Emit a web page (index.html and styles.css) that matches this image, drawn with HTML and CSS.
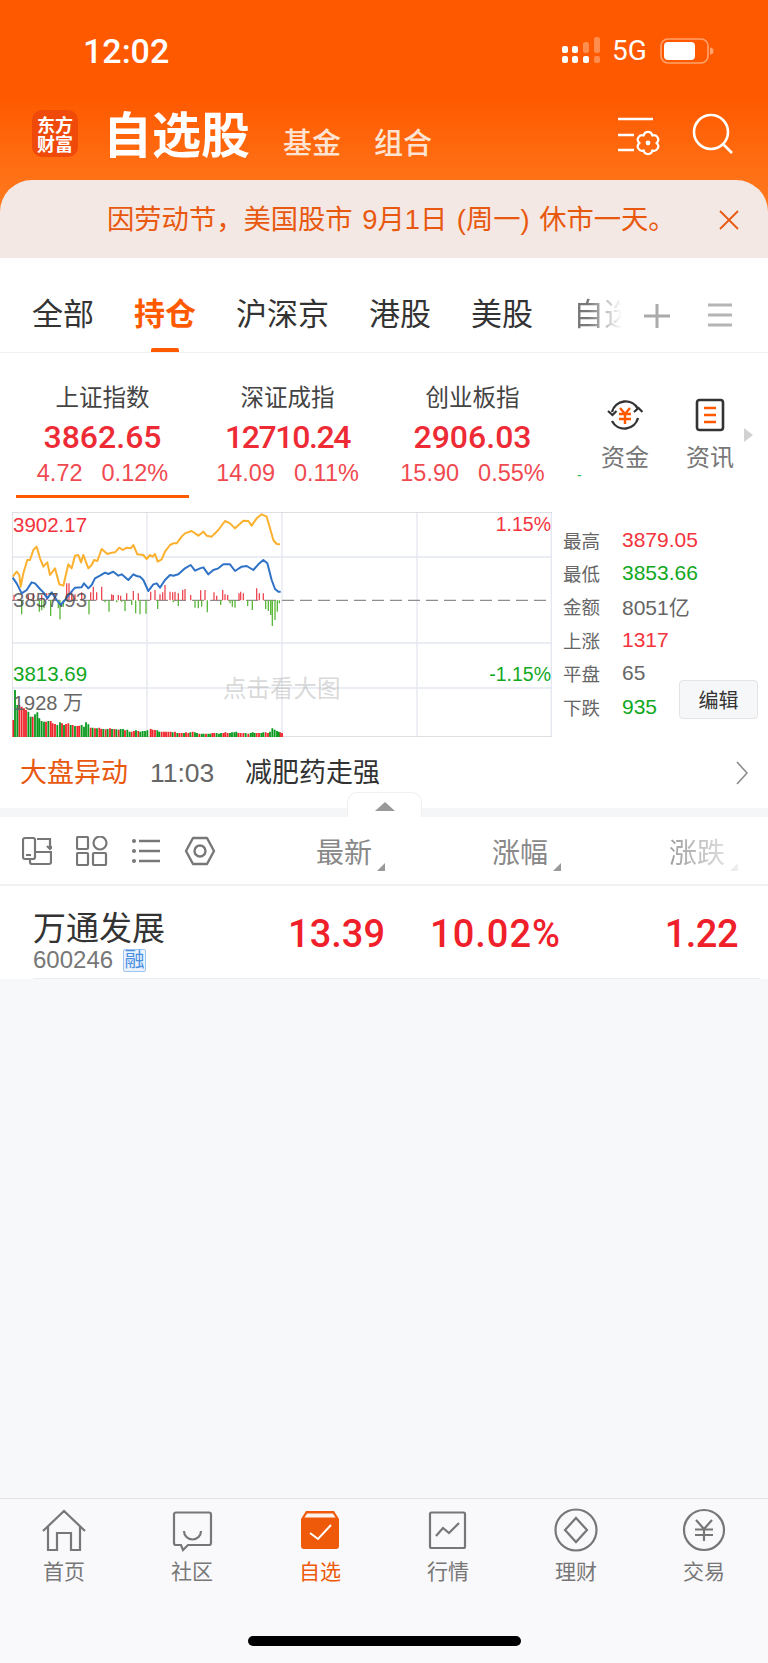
FILE: index.html
```html
<!DOCTYPE html>
<html lang="zh-CN">
<head>
<meta charset="utf-8">
<title>自选股</title>
<link rel="stylesheet" href="styles.css">
</head>
<body>
<div class="page">
  <header class="top">
    <div class="status">
      <span class="time">12:02</span>
      <svg class="signal" width="40" height="28" viewBox="0 0 40 28">
        <g fill="#fff"><rect x="1" y="9" width="6" height="7" rx="2"/><rect x="11" y="9" width="6" height="7" rx="2"/><rect x="1" y="19" width="6" height="7" rx="2"/><rect x="11" y="19" width="6" height="7" rx="2"/><rect x="22" y="19" width="6" height="7" rx="2"/></g>
        <g fill="#ff8d4d"><rect x="22" y="5" width="6" height="11" rx="2"/><rect x="33" y="0" width="6" height="16" rx="2"/><rect x="33" y="19" width="6" height="7" rx="2"/></g>
      </svg>
      <span class="net">5G</span>
      <svg class="battery" width="55" height="26" viewBox="0 0 55 26">
        <rect x="1" y="1" width="47" height="24" rx="7" fill="none" stroke="#ffa36e" stroke-width="1.6"/>
        <rect x="4" y="4" width="31" height="18" rx="4" fill="#fff"/>
        <path d="M50 9.5a3.5 3.5 0 0 1 0 7z" fill="#ffa36e"/>
      </svg>
    </div>
    <div class="titlebar">
      <div class="logo"><span>东方</span><span>财富</span></div>
      <h1 class="title">自选股</h1>
      <span class="subtitle">基金</span>
      <span class="subtitle">组合</span>
      <svg class="cfg" width="42" height="40" viewBox="0 0 42 40">
        <path d="M0 2H35M0 18H16M0 33H16" stroke="#fff" stroke-width="2.4" fill="none"/>
        <path d="M38.5 26A4.3 4.3 0 0 1 34.25 33.4A4.3 4.3 0 0 1 25.75 33.4A4.3 4.3 0 0 1 21.5 26A4.3 4.3 0 0 1 25.75 18.6A4.3 4.3 0 0 1 34.25 18.6A4.3 4.3 0 0 1 38.5 26Z" fill="none" stroke="#fff" stroke-width="2.2" stroke-linejoin="round"/>
        <circle cx="30" cy="26" r="2.4" fill="#fff"/>
      </svg>
      <svg class="search" width="42" height="42" viewBox="0 0 42 42">
        <circle cx="19" cy="19" r="17" fill="none" stroke="#fff" stroke-width="2.6"/>
        <path d="M31 31l9 9" stroke="#fff" stroke-width="2.6" fill="none"/>
      </svg>
    </div>
    <div class="notice">
      <span class="notice-text">因劳动节，美国股市 9月1日 (周一) 休市一天。</span>
      <svg class="notice-close" width="20" height="20" viewBox="0 0 20 20"><path d="M1 1l18 18M19 1L1 19" stroke="#e8590f" stroke-width="1.8" fill="none"/></svg>
    </div>
  </header>

  <nav class="tabs">
    <span class="tab">全部</span>
    <span class="tab active">持仓</span>
    <span class="tab">沪深京</span>
    <span class="tab">港股</span>
    <span class="tab">美股</span>
    <span class="tab fade">自选</span>
    <svg class="tab-plus" width="26" height="24" viewBox="0 0 26 24"><path d="M0 12H26M13 0V24" stroke="#aaa" stroke-width="3" fill="none"/></svg>
    <svg class="tab-menu" width="24" height="24" viewBox="0 0 24 24"><path d="M0 2H24M0 12H24M0 22H24" stroke="#b5b5b5" stroke-width="3" fill="none"/></svg>
  </nav>

  <section class="indices">
    <div class="idx selected">
      <div class="idx-name">上证指数</div>
      <div class="idx-val">3862.65</div>
      <div class="idx-chg"><span>4.72</span><span>0.12%</span></div>
    </div>
    <div class="idx">
      <div class="idx-name">深证成指</div>
      <div class="idx-val tight">12710.24</div>
      <div class="idx-chg"><span>14.09</span><span>0.11%</span></div>
    </div>
    <div class="idx">
      <div class="idx-name">创业板指</div>
      <div class="idx-val">2906.03</div>
      <div class="idx-chg"><span>15.90</span><span>0.55%</span></div>
    </div>
    <span class="tick">-</span>
    <div class="quick">
      <svg width="36" height="36" viewBox="0 0 36 36">
        <path d="M5 15A14 14 0 0 1 31 12M31 21A14 14 0 0 1 5 24" fill="none" stroke="#333" stroke-width="2.4"/>
        <path d="M1 14l4.5 4 4-4M27 15l4.500-4 4 4" fill="none" stroke="#333" stroke-width="2.2"/>
        <path d="M13 11l5 6 5-6M12 17H24M12 22H24M18 17V27" fill="none" stroke="#ff5a00" stroke-width="2.4"/>
      </svg>
      <span>资金</span>
    </div>
    <div class="quick">
      <svg width="36" height="36" viewBox="0 0 36 36">
        <rect x="5" y="3" width="26" height="30" rx="2.500" fill="none" stroke="#333" stroke-width="2.600"/>
        <path d="M12 11H24M12 18H24M12 25H24" fill="none" stroke="#ff5a00" stroke-width="2.600"/>
      </svg>
      <span>资讯</span>
    </div>
    <i class="more"></i>
  </section>

  <section class="market">
    <div class="chart">
      <svg class="chart-svg" width="540" height="225" viewBox="36 21 1620 675">
        <path class="grid" d="M36 156H1656M36 414H1656M36 549H1656M441 21V696M846 21V696M1251 21V696M1654 21V696"/>
        <path class="frame" d="M36 696V21H1656M36 696H1656"/>
        <path class="dash" d="M36 286H1656"/>
        <path class="bar-up" d="M42 286V270M85 286V270M100 286V265M125 286V270M140 286V265M165 286V265M200 286V235M207 286V235M215 286V262M225 286V268M245 286V262M272 286V262M280 286V245M290 286V262M305 286V245M335 286V268M340 286V270M355 286V270M362 286V272M380 286V265M400 286V258M415 286V265M452 286V260M465 286V255M480 286V268M488 286V262M495 286V240M510 286V260M518 286V262M525 286V260M535 286V265M548 286V255M555 286V252M572 286V270M602 286V256M615 286V255M642 286V262M650 286V272M668 286V255M675 286V268M683 286V270M717 286V265M722 286V260M730 286V265M770 286V250M778 286V265M790 286V265"/>
        <path class="bar-down" d="M65 286V328M118 286V320M125 286V316M132 286V310M152 286V333M180 286V343M175 286V310M190 286V305M267 286V328M315 286V292M327 286V320M350 286V292M375 286V318M365 286V290M395 286V300M407 286V325M420 286V328M438 286V326M473 286V312M520 286V292M535 286V303M585 286V308M595 286V310M605 286V305M622 286V322M662 286V300M690 286V295M697 286V305M705 286V308M743 286V303M757 286V315M797 286V312M805 286V318M812 286V330M817 286V363M825 286V345M832 286V320M838 286V295"/>
        <polyline class="line-avg" points="38,215 50,200 58,210 62,245 70,205 82,165 90,165 100,135 110,125 120,160 130,185 142,172 150,210 165,190 178,238 190,242 205,178 215,190 225,152 235,150 243,172 250,150 265,190 275,180 282,165 292,168 305,132 322,147 335,143 345,142 358,128 368,135 380,128 392,130 400,120 412,148 430,150 440,162 450,150 458,155 465,147 473,170 485,163 495,140 510,120 520,115 530,115 545,95 555,85 575,78 595,92 610,80 620,92 635,95 655,75 675,48 690,55 705,70 730,47 745,48 755,62 770,40 785,28 800,35 810,70 820,105 830,117 840,118"/>
        <polyline class="line-price" points="38,218 50,235 65,265 80,255 95,232 105,235 120,252 130,262 142,280 155,262 170,285 182,300 195,285 210,265 225,248 245,247 252,235 265,250 275,240 285,220 300,212 315,203 325,207 340,200 355,212 365,208 385,225 400,208 410,213 420,215 430,225 445,258 460,238 470,235 480,248 495,225 510,210 520,212 535,208 555,190 572,180 585,197 600,190 610,187 625,208 640,195 655,190 670,178 690,178 705,198 725,185 740,183 760,195 775,178 790,165 802,175 815,225 825,252 835,260 842,260"/>
        <path class="vol-up" d="M40 696V645M58 696V600M65 696V605M72 696V610M78 696V615M98 696V635M138 696V650M152 696V648M158 696V655M165 696V657M186 696V655M198 696V657M205 696V655M218 696V660M232 696V663M238 696V662M272 696V668M285 696V670M298 696V668M304 696V672M317 696V673M330 696V670M343 696V672M356 696V674M375 696V676M395 696V680M402 696V678M415 696V678M452 696V672M458 696V674M465 696V675M485 696V680M492 696V680M498 696V680M505 696V680M512 696V680M525 696V680M538 696V684M545 696V684M558 696V682M565 696V684M578 696V680M598 696V686M618 696V686M637 696V684M643 696V684M670 696V684M676 696V682M683 696V684M715 696V684M722 696V684M730 696V684M745 696V686M770 696V684M777 696V684M797 696V682M804 696V684M840 696V682M846 696V684"/>
        <path class="vol-down" d="M45 696V555M52 696V600M85 696V620M92 696V635M105 696V628M112 696V622M118 696V640M125 696V648M132 696V650M145 696V648M172 696V660M180 696V652M192 696V660M212 696V660M225 696V663M245 696V660M252 696V665M258 696V652M265 696V658M278 696V668M291 696V670M310 696V672M323 696V672M336 696V672M349 696V673M362 696V672M369 696V672M382 696V674M389 696V680M408 696V676M421 696V680M428 696V678M435 696V678M442 696V676M472 696V676M478 696V680M518 696V682M532 696V684M552 696V684M571 696V682M585 696V682M591 696V684M605 696V686M611 696V686M625 696V686M631 696V686M650 696V684M657 696V686M663 696V684M690 696V684M696 696V682M703 696V682M709 696V680M737 696V684M752 696V684M758 696V682M764 696V684M784 696V684M790 696V682M810 696V680M817 696V670M824 696V674M831 696V678M836 696V680"/>
      </svg>
      <span class="lab lab-high up">3902.17</span>
      <span class="lab lab-hp up">1.15%</span>
      <span class="lab lab-mid">3857.93</span>
      <span class="lab lab-low down">3813.69</span>
      <span class="lab lab-lp down">-1.15%</span>
      <span class="lab lab-vol">1928 万</span>
      <span class="watermark">点击看大图</span>
    </div>
    <div class="stats">
      <dl class="stat-list">
        <div class="stat"><dt>最高</dt><dd class="up">3879.05</dd></div>
        <div class="stat"><dt>最低</dt><dd class="down">3853.66</dd></div>
        <div class="stat"><dt>金额</dt><dd>8051亿</dd></div>
        <div class="stat"><dt>上涨</dt><dd class="up">1317</dd></div>
        <div class="stat"><dt>平盘</dt><dd>65</dd></div>
        <div class="stat"><dt>下跌</dt><dd class="down">935</dd></div>
      </dl>
      <button class="edit">编辑</button>
    </div>
  </section>

  <div class="alert">
    <span class="alert-tag">大盘异动</span>
    <span class="alert-time">11:03</span>
    <span class="alert-text">减肥药走强</span>
    <svg class="alert-arrow" width="12" height="24" viewBox="0 0 12 24"><path d="M1 1l10 11L1 23" fill="none" stroke="#8a8a8a" stroke-width="1.6"/></svg>
  </div>

  <div class="strip"><div class="handle"><i></i></div></div>

  <div class="cols thead">
    <div class="tools">
      <svg width="30" height="30" viewBox="0 0 30 30">
        <rect x="1" y="2" width="12" height="21" rx="2" fill="none" stroke="#777" stroke-width="2.200"/>
        <path d="M4 19H9M13 16H29V26a2 2 0 0 1-2 2H10a2 2 0 0 1-2-2V23M15 3H28V13M25 10l3 3 3-3" fill="none" stroke="#777" stroke-width="2.200"/>
      </svg>
      <svg width="32" height="30" viewBox="0 0 32 30">
        <g fill="none" stroke="#777" stroke-width="2.200"><rect x="1" y="1" width="11" height="12" rx="1"/><circle cx="24" cy="7" r="6.500"/><rect x="1" y="17" width="11" height="12" rx="1"/><rect x="17" y="17" width="13" height="12" rx="1"/></g>
      </svg>
      <svg width="28" height="30" viewBox="0 0 28 30">
        <g fill="#777"><circle cx="2" cy="5" r="2"/><circle cx="2" cy="15" r="2"/><circle cx="2" cy="25" r="2"/></g>
        <path d="M7 5H28M7 15H28M7 25H28" fill="none" stroke="#777" stroke-width="2.400"/>
      </svg>
      <svg width="32" height="30" viewBox="0 0 32 30">
        <path d="M2 15L9 2H23L30 15 23 28H9Z" fill="none" stroke="#777" stroke-width="2.400" stroke-linejoin="round"/>
        <circle cx="16" cy="15" r="5.500" fill="none" stroke="#777" stroke-width="2.400"/>
      </svg>
    </div>
    <span class="th">最新</span>
    <span class="th">涨幅</span>
    <span class="th th-fade">涨跌</span>
  </div>

  <div class="cols row">
    <div class="stock">
      <div class="stock-name">万通发展</div>
      <div class="stock-code"><span>600246</span><b class="badge">融</b></div>
    </div>
    <span class="num">13.39</span>
    <span class="num wide">10.02%</span>
    <span class="num narrow">1.22</span>
  </div>

  <main class="empty"></main>

  <footer class="nav">
    <div class="nav-items">
      <div class="nav-item">
        <svg width="44" height="44" viewBox="0 0 44 44"><path d="M1 23L22 3 43 23M6 19V42H15V25H29V42H38V19" fill="none" stroke="#777" stroke-width="2.200"/></svg>
        <span>首页</span>
      </div>
      <div class="nav-item">
        <svg width="44" height="44" viewBox="0 0 44 44"><path d="M6 4.500H39a2 2 0 0 1 2 2V35a2 2 0 0 1-2 2H18L13 42 11 37H6a2 2 0 0 1-2-2V6.500a2 2 0 0 1 2-2Z" fill="none" stroke="#777" stroke-width="2.200"/><path d="M14 23a8.500 8.500 0 0 0 17 0" fill="none" stroke="#777" stroke-width="2.200"/></svg>
        <span>社区</span>
      </div>
      <div class="nav-item current">
        <svg width="44" height="44" viewBox="0 0 44 44"><path d="M8 3H36L41 11V38a3 3 0 0 1-3 3H6a3 3 0 0 1-3-3V11Z" fill="#ee5a0a"/><path d="M9 5.500H35L37.500 9.500H6.500Z" fill="#fdf3ec"/><path d="M12 25l8 6 13-14" fill="none" stroke="#fff" stroke-width="2"/></svg>
        <span>自选</span>
      </div>
      <div class="nav-item">
        <svg width="44" height="44" viewBox="0 0 44 44"><rect x="4" y="4.500" width="35" height="35.500" rx="1.500" fill="none" stroke="#777" stroke-width="2.200"/><path d="M10 28l7-8 6 5 10-10" fill="none" stroke="#777" stroke-width="2.200"/></svg>
        <span>行情</span>
      </div>
      <div class="nav-item">
        <svg width="44" height="44" viewBox="0 0 44 44"><circle cx="22" cy="22" r="20.500" fill="none" stroke="#777" stroke-width="2.200"/><path d="M22 10L33 22 22 34 11 22Z" fill="none" stroke="#777" stroke-width="2.200"/></svg>
        <span>理财</span>
      </div>
      <div class="nav-item">
        <svg width="44" height="44" viewBox="0 0 44 44"><circle cx="22" cy="22" r="20" fill="none" stroke="#777" stroke-width="2.200"/><path d="M14 12l8 9 8-9M13 21.500H31M13 27H31M22 21V33" fill="none" stroke="#777" stroke-width="2.200"/></svg>
        <span>交易</span>
      </div>
    </div>
    <div class="home-bar"></div>
  </footer>
</div>
</body>
</html>
```

FILE: styles.css
```css
* { box-sizing: border-box; }
html, body { margin: 0; padding: 0; }
body {
  font-family: "Liberation Sans", "Noto Sans CJK SC", sans-serif;
  background: #fff;
  color: #333;
}
.page {
  width: 768px;
  height: 1663px;
  display: flex;
  flex-direction: column;
  overflow: hidden;
  background: #fff;
}
.up { color: #f4333c; }
.down { color: #12a81e; }

/* header */
.top {
  height: 258px;
  flex: none;
  background: linear-gradient(180deg, #ff5900 0%, #ff5900 38%, #ff7a1e 80%, #ff7a1e 100%);
  display: flex;
  flex-direction: column;
}
.status {
  height: 90px;
  flex: none;
  display: flex;
  align-items: center;
  padding: 12px 0 0 83px;
  color: #fff;
}
.time { font: 500 34px/40px Roboto, sans-serif; width: 478px; }
.net { font: 400 28px/30px Roboto, sans-serif; margin-left: 11px; }
.signal { margin-top: 0; }
.battery { margin-left: 13px; margin-top: -1px; }
.titlebar {
  height: 90px;
  flex: none;
  display: flex;
  align-items: flex-start;
  padding: 20px 0 0 32px;
  color: #fff;
}
.logo {
  width: 46px;
  height: 47px;
  background: #f04a0a;
  border-radius: 10px;
  font: 700 18px/19px "Noto Sans CJK SC", sans-serif;
  display: flex;
  flex-direction: column;
  align-items: center;
  justify-content: center;
}
.title {
  margin: -8px 0 0 25px;
  font: 700 49px/60px "Noto Sans CJK SC", sans-serif;
  width: 180px;
  white-space: nowrap;
}
.subtitle {
  font: 500 29px/36px "Noto Sans CJK SC", sans-serif;
  color: #fde3d2;
  margin-top: 13px;
  width: 91px;
  white-space: nowrap;
}
.cfg { flex: none; margin: 7px 0 0 153px; }
.search { flex: none; margin: 3px 0 0 32px; }
.notice {
  flex: 1;
  background: #f4e8e4;
  border-radius: 32px 32px 0 0;
  padding: 22px 0 0 107px;
  display: flex;
  align-items: flex-start;
}
.notice-text {
  font-size: 27.300px;
  word-spacing: 2px;
  line-height: 36px;
  color: #e8590f;
  width: 612px;
  flex: none;
  white-space: nowrap;
}
.notice-close { flex: none; margin-top: 8px; }

/* tabs */
.tabs {
  height: 95px;
  flex: none;
  padding: 38px 0 0 32px;
  display: flex;
  align-items: flex-start;
  gap: 40px;
  border-bottom: 1px solid #f0f0f0;
}
.tab {
  position: relative;
  flex: none;
  font-size: 31px;
  line-height: 38px;
  height: 56px;
  color: #333;
}
.tab.active { color: #ff5a00; font-weight: 700; }
.tab.active::after {
  content: "";
  position: absolute;
  left: 17px;
  bottom: 0;
  width: 28px;
  height: 4px;
  background: #ff5a00;
  border-radius: 2px 2px 0 0;
}
.tab.fade {
  width: 49px;
  overflow: hidden;
  white-space: nowrap;
  color: #777;
  -webkit-mask-image: linear-gradient(90deg, #000 30%, transparent 100%);
  mask-image: linear-gradient(90deg, #000 30%, transparent 100%);
}
.tab-plus { flex: none; margin: 8px 0 0 -18px; }
.tab-menu { flex: none; margin: 7px 0 0 -2px; }

/* indices */
.indices {
  display: flex;
  flex: none;
  align-items: flex-start;
  gap: 12px;
  padding-left: 16px;
}
.idx {
  width: 173px;
  flex: none;
  padding: 30px 0 7px;
  border-bottom: 3px solid transparent;
  text-align: center;
}
.idx.selected { border-bottom-color: #ff5a00; }
.idx-name { font-size: 23.500px; line-height: 30px; color: #444; }
.idx-val {
  font: 500 32px/40px Roboto, sans-serif;
  color: #ee2b35;
  margin-top: 4px;
}
.idx-val.tight { letter-spacing: -1.400px; }
.idx-chg {
  display: flex;
  justify-content: center;
  gap: 19px;
  font-size: 23.500px;
  line-height: 30px;
  color: #ef4a50;
  margin-top: 1px;
}
.tick {
  flex: none;
  width: 10px;
  height: 140px;
  padding: 112px 0 0 6px;
  font-size: 14px;
  line-height: 20px;
  color: #2db84a;
}
.quick {
  width: 64px;
  flex: none;
  display: flex;
  flex-direction: column;
  align-items: center;
  padding-top: 44px;
  font-size: 24px;
  line-height: 32px;
  color: #777;
  gap: 9px;
}
.quick svg { display: block; }
.quick + .quick { margin-left: 9px; }
.more {
  flex: none;
  width: 0;
  height: 0;
  margin: 75px 0 0 -10px;
  border-left: 9px solid #d2d2d2;
  border-top: 7px solid transparent;
  border-bottom: 7px solid transparent;
}

/* market */
.market {
  display: flex;
  flex: none;
  margin-top: 14px;
  height: 225px;
}
.chart {
  position: relative;
  flex: none;
  width: 540px;
  height: 225px;
  margin-left: 12px;
}
.chart-svg { display: block; }
.grid { fill: none; stroke: #e4e7ef; stroke-width: 4; }
.frame { fill: none; stroke: #d4d5da; stroke-width: 4; }
.dash { fill: none; stroke: #8e8e8e; stroke-width: 4; stroke-dasharray: 36 18; }
.bar-up { fill: none; stroke: #ee4a55; stroke-width: 4; }
.bar-down { fill: none; stroke: #5cb83c; stroke-width: 4; }
.line-avg { fill: none; stroke: #fbb02e; stroke-width: 6; stroke-linejoin: round; }
.line-price { fill: none; stroke: #2f72c6; stroke-width: 6; stroke-linejoin: round; }
.vol-up { fill: none; stroke: #f0262d; stroke-width: 5.500; }
.vol-down { fill: none; stroke: #0a9a1e; stroke-width: 5.500; }
.lab { position: absolute; font-size: 20px; line-height: 24px; white-space: nowrap; }
.lab-high { left: 1px; top: 1px; font-size: 20.500px; }
.lab-hp { right: 1px; top: 0; font-size: 19.500px; }
.lab-mid { left: 1px; top: 76px; color: rgba(70,70,70,.8); font-size: 20.500px; }
.lab-low { left: 1px; top: 150px; font-size: 20.500px; }
.lab-lp { right: 1px; top: 150px; font-size: 19.500px; }
.lab-vol { left: 1px; top: 179px; color: #666; }
.watermark {
  position: absolute;
  left: 211px;
  top: 162px;
  font-size: 23.500px;
  line-height: 30px;
  color: rgba(170,170,170,.45);
}
.stats {
  flex: 1;
  display: flex;
  padding: 11px 10px 18px 11px;
  justify-content: space-between;
}
.stat-list { margin: 0; width: 116px; flex: none; }
.stat { display: flex; height: 33.400px; align-items: center; white-space: nowrap; }
.stat dt { width: 59px; flex: none; font-size: 18.500px; color: #666; }
.stat dd { margin: 0; font-size: 21px; color: #666; white-space: nowrap; }
.stat dd.up { color: #f4333c; }
.stat dd.down { color: #12a81e; }
.edit {
  align-self: flex-end;
  flex: none;
  width: 79px;
  height: 39px;
  padding: 0;
  font-family: inherit;
  font-size: 20px;
  color: #333;
  background: #f6f7f9;
  border: 1px solid #e4e4e4;
  border-radius: 4px;
}

/* alert */
.alert {
  height: 71px;
  flex: none;
  display: flex;
  align-items: center;
  padding: 0 20px 0 20px;
}
.alert-tag { font-size: 27px; line-height: 36px; color: #e8590f; width: 130px; white-space: nowrap; }
.alert-time { font-size: 26.500px; line-height: 36px; color: #666; width: 95px; }
.alert-text { font-size: 27px; line-height: 36px; color: #333; }
.alert-arrow { margin-left: auto; }

.strip {
  height: 9px;
  flex: none;
  background: #f5f6f8;
  position: relative;
}
.handle {
  position: absolute;
  left: 347px;
  bottom: 0;
  width: 75px;
  height: 25px;
  background: #fff;
  border: 1px solid #f0f0f0;
  border-bottom: 0;
  border-radius: 10px 10px 0 0;
  display: flex;
  justify-content: center;
  padding-top: 9px;
}
.handle i {
  width: 0;
  height: 0;
  border-left: 10px solid transparent;
  border-right: 10px solid transparent;
  border-bottom: 9px solid #999;
}

/* table */
.cols {
  display: grid;
  flex: none;
  grid-template-columns: 1fr 165px 176px 177px;
  padding-right: 30px;
}
.thead {
  height: 69px;
  padding-left: 22px;
  align-items: center;
  border-bottom: 2px solid #f1f1f1;
}
.tools { display: flex; gap: 24px; }
.tools svg { display: block; }
.th {
  position: relative;
  font-size: 28px;
  line-height: 36px;
  color: #888;
  text-align: right;
  padding-right: 13px;
  margin-top: 6px;
}
.th::after {
  content: "";
  position: absolute;
  right: 0;
  bottom: 1px;
  border-left: 8px solid transparent;
  border-bottom: 8px solid #999;
}
.th-fade {
  -webkit-mask-image: linear-gradient(90deg, #000 50%, rgba(0,0,0,.15) 100%);
  mask-image: linear-gradient(90deg, #000 50%, rgba(0,0,0,.15) 100%);
}
.row {
  height: 93px;
  padding-left: 33px;
  position: relative;
  align-items: start;
}
.row::after {
  content: "";
  position: absolute;
  left: 33px;
  right: 8px;
  bottom: 0;
  height: 1px;
  background: #eceded;
}
.stock { padding-top: 24px; }
.stock-name { font-size: 33px; line-height: 38px; color: #333; }
.stock-code {
  display: flex;
  align-items: center;
  gap: 10px;
  font-size: 24px;
  line-height: 24px;
  color: #777;
}
.badge {
  width: 23px;
  height: 23px;
  font-size: 20px;
  font-weight: 400;
  line-height: 21px;
  text-align: center;
  color: #4a90e2;
  background: #eaf3fd;
  border: 1px solid #9cc5f0;
  border-radius: 2px;
}
.num {
  font: 500 38px/46px Roboto, sans-serif;
  color: #f0202a;
  text-align: right;
  padding-top: 25px;
  white-space: nowrap;
}
.num.wide { letter-spacing: 1px; }
.num.narrow { letter-spacing: -.5px; }
.empty { flex: 1; background: #f7f8fa; }

/* bottom nav */
.nav {
  height: 165px;
  flex: none;
  background: #f9f9fb;
  border-top: 1px solid #e2e2e2;
  padding-top: 9px;
}
.nav-items { display: grid; grid-template-columns: repeat(6, 128px); }
.nav-item {
  display: flex;
  flex-direction: column;
  align-items: center;
  font-size: 21px;
  line-height: 28px;
  color: #777;
  gap: 6px;
}
.nav-item svg { display: block; }
.nav-item.current { color: #ee5a0a; }
.home-bar {
  width: 273px;
  height: 10px;
  margin: 50px auto 0;
  background: #000;
  border-radius: 5px;
}
```
